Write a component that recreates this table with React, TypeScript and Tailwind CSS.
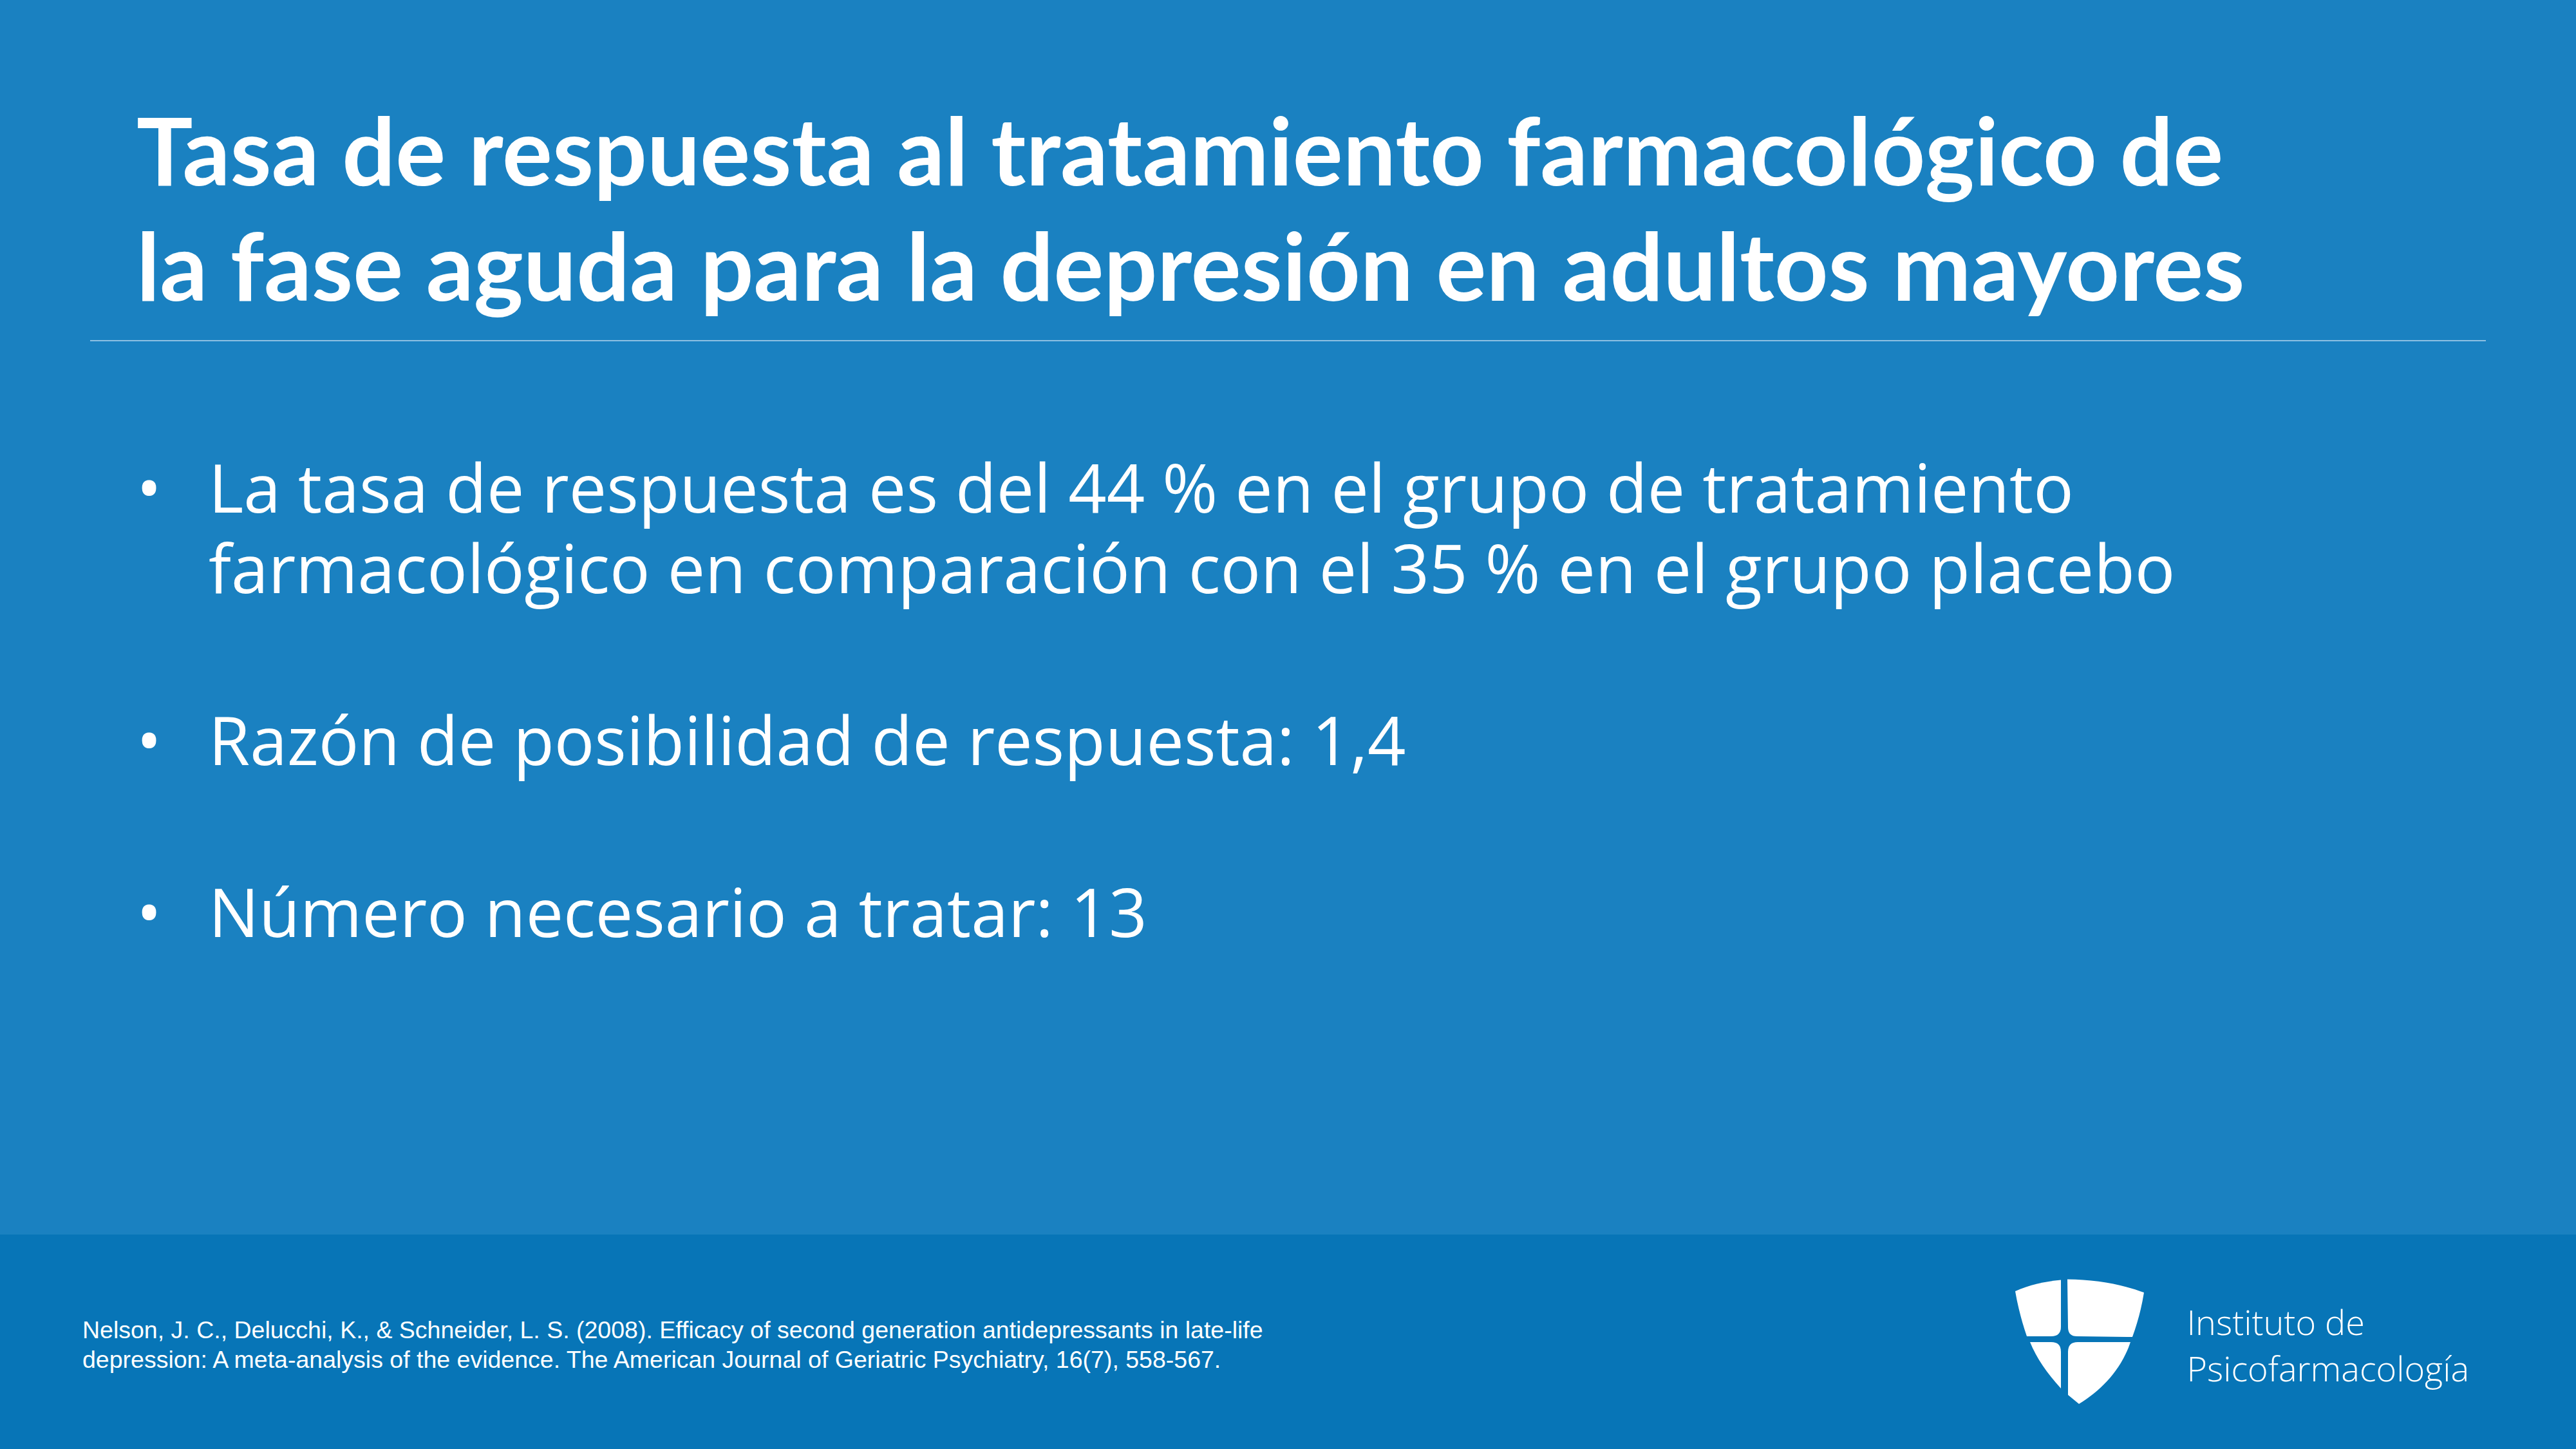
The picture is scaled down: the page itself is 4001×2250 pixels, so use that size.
const bullets = [
  [
    'La tasa de respuesta es del 44 % en el grupo de tratamiento',
    'farmacológico en comparación con el 35 % en el grupo placebo',
  ],
  ['Razón de posibilidad de respuesta: 1,4'],
  ['Número necesario a tratar: 13'],
]

function Shield() {
  return (
    <svg width="202" height="196" viewBox="0 0 200 196" fill="#ffffff">
      <path d="M0,19 C22,9 45,4 71,1.5 L71,74 Q71,89 56,89 L18,89 C10,66 4,42 0,19 Z" />
      <path d="M81,0.5 C125,1 165,8 200,21 C196,46 190,68 182,90 L96,89 Q82,89 82,75 Z" />
      <path d="M23,98 L56,98 Q71,98 71,113 L71,170 C50,147 33,123 23,98 Z" />
      <path d="M97,98 L179,98 C165,140 135,172 99,194 L82,180 L82,113 Q82,98 97,98 Z" />
    </svg>
  )
}

export default function App() {
  return (
    <div className="w-[4001px] h-[2250px] flex flex-col bg-[#1a81c1] text-white overflow-hidden">
      <main className="flex-1 px-[140px] pt-[142px]">
        <h1 className="pl-[72px] font-['Lato',sans-serif] font-bold text-[146px] leading-[179px]">
          Tasa de respuesta al tratamiento farmacológico de
          <br />
          la fase aguda para la depresión en adultos mayores
        </h1>
        <div className="mt-[28px] h-[2px] bg-[#8dc0e2]" />
        <ul className="mt-[163px] pl-[72px] flex flex-col gap-[142px] font-['Open_Sans',sans-serif] text-[104px] leading-[125px]">
          {bullets.map((lines) => (
            <li key={lines[0]} className="flex">
              <span className="w-[112px] shrink-0">•</span>
              <span>
                {lines.map((l, i) => (
                  <span key={l}>
                    {i > 0 && <br />}
                    {l}
                  </span>
                ))}
              </span>
            </li>
          ))}
        </ul>
      </main>

      <footer className="h-[333px] bg-[#0775b7] flex items-center justify-between pl-[128px] pr-[166px]">
        <p className="mt-[8px] font-['Liberation_Sans',Arial,sans-serif] text-[37.5px] leading-[46px]">
          Nelson, J. C., Delucchi, K., &amp; Schneider, L. S. (2008). Efficacy of second generation antidepressants in late-life
          <br />
          depression: A meta-analysis of the evidence. The American Journal of Geriatric Psychiatry, 16(7), 558-567.
        </p>
        <div className="flex items-center gap-[66px]">
          <Shield />
          <div className="mt-[8px] font-['Open_Sans',sans-serif] font-light text-[54px] leading-[72px]">
            Instituto de
            <br />
            Psicofarmacología
          </div>
        </div>
      </footer>
    </div>
  )
}
